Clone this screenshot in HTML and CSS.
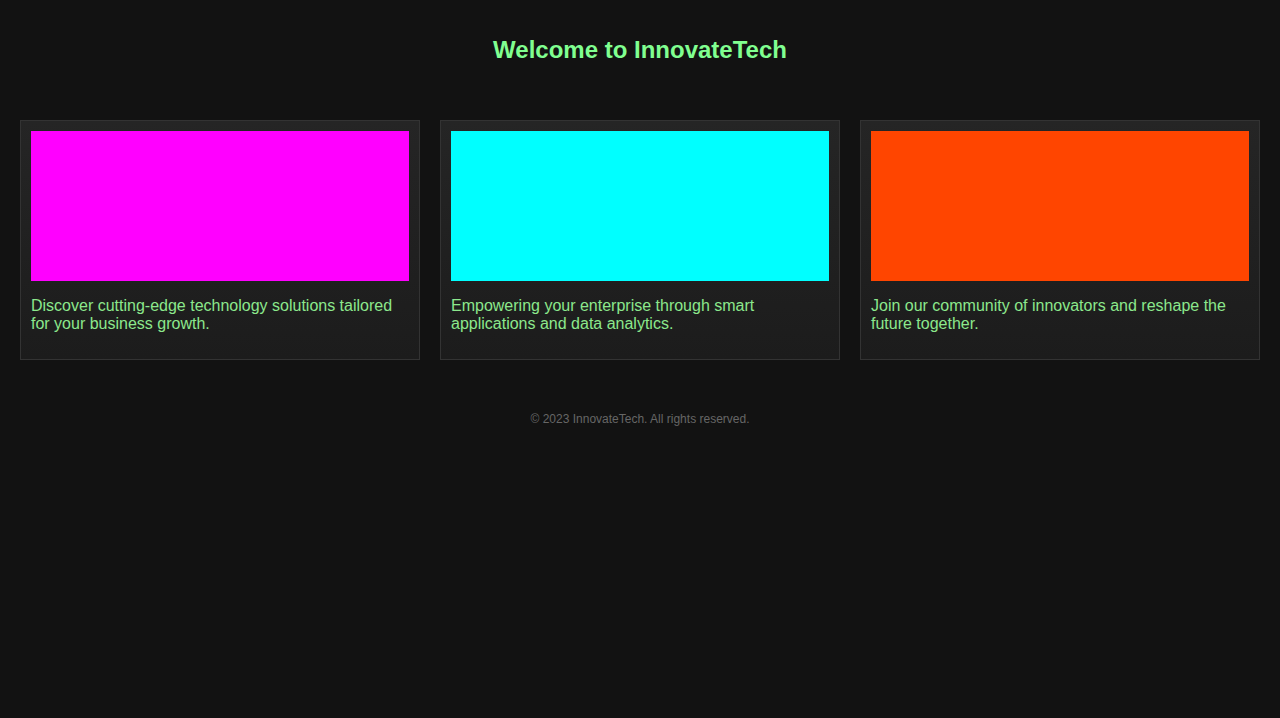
FILE: index.html
```html
<!DOCTYPE html>
<html lang="en">
<head>
<meta charset="utf-8">
<title>InnovateTech</title>
<link rel="stylesheet" href="styles.css">
</head>
<body>
<header class="site-header">
  <h1 class="title">Welcome to InnovateTech</h1>
</header>
<main class="cards">
  <section class="card">
    <div class="card-img magenta"></div>
    <p class="card-text">Discover cutting-edge technology solutions tailored for your business growth.</p>
  </section>
  <section class="card">
    <div class="card-img cyan"></div>
    <p class="card-text">Empowering your enterprise through smart applications and data analytics.</p>
  </section>
  <section class="card">
    <div class="card-img orange"></div>
    <p class="card-text">Join our community of innovators and reshape the future together.</p>
  </section>
</main>
<footer class="site-footer">
  <p class="copy">© 2023 InnovateTech. All rights reserved.</p>
</footer>
</body>
</html>
```
FILE: styles.css
```css
html, body {
  margin: 0;
  padding: 0;
  background: #121212;
  font-family: "Liberation Sans", Arial, sans-serif;
}
.site-header {
  padding: 20px;
  text-align: center;
}
.title {
  margin: 16px 0;
  font-size: 24px;
  font-weight: bold;
  color: #80ff90;
}
.cards {
  display: flex;
  gap: 20px;
  padding: 20px;
}
.card {
  flex: 0 0 378px;
  padding: 10px;
  border: 1px solid #333;
  background: linear-gradient(to bottom, #252525, #1c1c1c);
}
.card-img {
  height: 150px;
}
.magenta { background: #ff00ff; }
.cyan { background: #00ffff; }
.orange { background: #ff4500; }
.card-text {
  margin: 16px 0;
  font-size: 16px;
  color: #8ce88c;
}
.site-footer {
  margin-top: 20px;
  padding: 12px 20px;
  text-align: center;
}
.copy {
  margin: 0;
  font-size: 12px;
  color: #666;
}
```
